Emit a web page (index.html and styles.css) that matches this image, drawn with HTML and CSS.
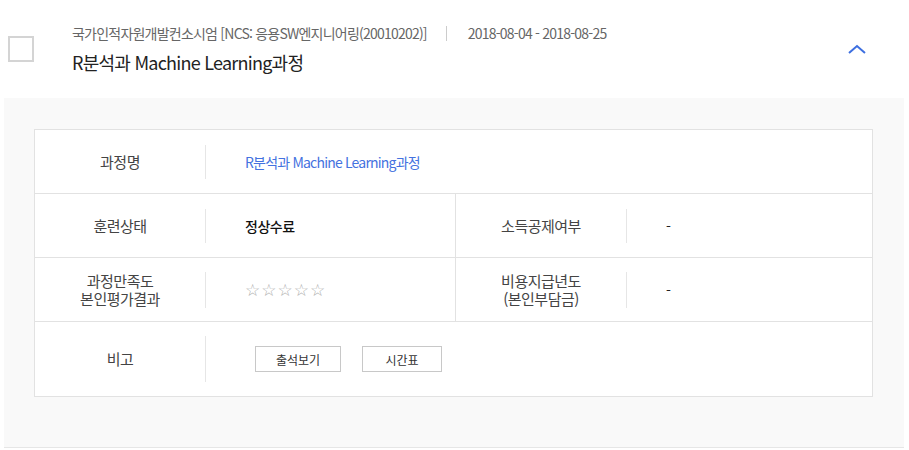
FILE: index.html
```html
<!DOCTYPE html>
<html lang="ko">
<head>
<meta charset="utf-8">
<link rel="stylesheet" href="styles.css">
</head>
<body>
<div class="wrap">
  <div class="head">
    <span class="check"></span>
    <div class="head-text">
      <div class="meta">
        <span class="org">국가인적자원개발컨소시엄 [NCS: 응용SW엔지니어링(20010202)]</span>
        <span class="vbar"></span>
        <span class="date">2018-08-04 - 2018-08-25</span>
      </div>
      <div class="title">R분석과 Machine Learning과정</div>
    </div>
    <svg class="chev" width="18" height="10" viewBox="0 0 18 10"><polyline points="1,9 9,2 17,9" fill="none" stroke="#3d6fe0" stroke-width="2"/></svg>
  </div>
  <div class="panel">
    <div class="table">
      <div class="row">
        <div class="lab">과정명</div>
        <div class="val link">R분석과 Machine Learning과정</div>
      </div>
      <div class="row">
        <div class="half">
          <div class="lab">훈련상태</div>
          <div class="val strong">정상수료</div>
        </div>
        <div class="half right">
          <div class="lab">소득공제여부</div>
          <div class="val">-</div>
        </div>
      </div>
      <div class="row">
        <div class="half">
          <div class="lab two">과정만족도<br>본인평가결과</div>
          <div class="val stars">
            <span>☆</span><span>☆</span><span>☆</span><span>☆</span><span>☆</span>
          </div>
        </div>
        <div class="half right">
          <div class="lab two">비용지급년도<br>(본인부담금)</div>
          <div class="val">-</div>
        </div>
      </div>
      <div class="row tall">
        <div class="lab">비고</div>
        <div class="val btns">
          <button class="btn b1">출석보기</button>
          <button class="btn b2">시간표</button>
        </div>
      </div>
    </div>
  </div>
</div>
</body>
</html>
```
FILE: styles.css
```css
* { box-sizing: border-box; }
body {
  margin: 0;
  background: #fff;
  font-family: "Noto Sans CJK KR", "Noto Sans", sans-serif;
  color: #333;
}
.wrap {
  padding: 0 5px 0 4px;
}
.head {
  height: 98px;
  display: flex;
  align-items: flex-start;
  position: relative;
}
.check {
  width: 26px;
  height: 26px;
  border: 2px solid #d4d4d4;
  margin: 36px 0 0 4px;
  flex: none;
}
.head-text {
  margin-left: 38px;
  padding-top: 23px;
}
.meta {
  display: flex;
  align-items: center;
  font-size: 14px;
  letter-spacing: -0.78px;
  color: #666;
  height: 20px;
}
.vbar {
  width: 1px;
  height: 15px;
  background: #ccc;
  margin: 0 21px 0 19px;
}
.title {
  margin-top: 7px;
  font-size: 18px;
  letter-spacing: -0.75px;
  color: #222;
  line-height: 24px;
}
.chev {
  position: absolute;
  left: 844px;
  top: 44px;
}
.panel {
  background: #f9f9f9;
  border-bottom: 1px solid #e6e6e6;
  padding: 31px 31px 50px 30px;
}
.table {
  background: #fff;
  border: 1px solid #e2e2e2;
}
.row {
  display: flex;
  align-items: center;
  height: 64px;
  border-bottom: 1px solid #e2e2e2;
}
.row.tall {
  height: 74px;
  border-bottom: none;
}
.half {
  display: flex;
  align-items: center;
  height: 100%;
  width: 420px;
}
.half.right {
  flex: 1;
  border-left: 1px solid #e2e2e2;
}
.lab {
  width: 171px;
  flex: none;
  text-align: center;
  font-size: 15px;
  letter-spacing: -0.5px;
  color: #444;
  height: 34px;
  line-height: 34px;
  border-right: 1px solid #e6e6e6;
}
.row.tall .lab { height: 46px; line-height: 46px; }
.lab.two {
  line-height: 18px;
  height: 36px;
  font-size: 15px;
}
.val {
  padding-left: 39px;
  font-size: 14px;
  letter-spacing: -0.5px;
  color: #222;
}
.half.right .val { padding-left: 39px; }
.link { color: #4472e0; letter-spacing: -0.8px; }
.strong { color: #111; font-weight: 500; }
.stars {
  display: flex;
  gap: 1px;
  color: #b0b0b0;
  font-family: "DejaVu Sans", sans-serif;
  font-size: 17px;
  letter-spacing: 0;
  padding-left: 39px;
}
.btns {
  display: flex;
  gap: 21px;
  padding-left: 49px;
}
.btn {
  height: 26px;
  background: #fff;
  border: 1px solid #c8c8c8;
  font-family: "Noto Sans CJK KR", sans-serif;
  font-size: 12px;
  color: #333;
  padding: 0;
}
.b1 { width: 86px; }
.b2 { width: 80px; }
```
